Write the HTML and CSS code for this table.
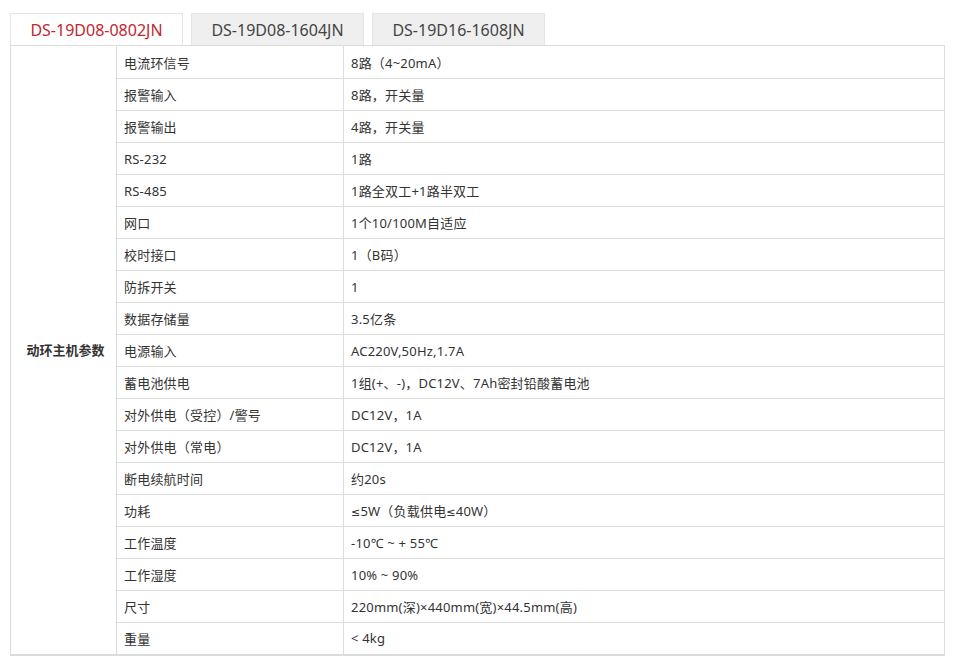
FILE: index.html
```html
<!DOCTYPE html>
<html lang="zh-CN">
<head>
<meta charset="utf-8">
<title>DS-19D08-0802JN 参数</title>
<link rel="stylesheet" href="styles.css">
</head>
<body>
<div class="wrap">
  <div class="tabs">
    <div class="tab active">DS-19D08-0802JN</div>
    <div class="tab">DS-19D08-1604JN</div>
    <div class="tab">DS-19D16-1608JN</div>
  </div>
  <table class="spec">
    <colgroup>
      <col class="c1"><col class="c2"><col class="c3">
    </colgroup>
    <tbody>
      <tr class="first"><td class="group" rowspan="19">动环主机参数</td><td>电流环信号</td><td>8路（4~20mA）</td></tr>
      <tr><td>报警输入</td><td>8路，开关量</td></tr>
      <tr><td>报警输出</td><td>4路，开关量</td></tr>
      <tr><td>RS-232</td><td>1路</td></tr>
      <tr><td>RS-485</td><td>1路全双工+1路半双工</td></tr>
      <tr><td>网口</td><td>1个10/100M自适应</td></tr>
      <tr><td>校时接口</td><td>1（B码）</td></tr>
      <tr><td>防拆开关</td><td>1</td></tr>
      <tr><td>数据存储量</td><td>3.5亿条</td></tr>
      <tr><td>电源输入</td><td>AC220V,50Hz,1.7A</td></tr>
      <tr><td>蓄电池供电</td><td>1组(+、-)，DC12V、7Ah密封铅酸蓄电池</td></tr>
      <tr><td>对外供电（受控）/警号</td><td>DC12V，1A</td></tr>
      <tr><td>对外供电（常电）</td><td>DC12V，1A</td></tr>
      <tr><td>断电续航时间</td><td>约20s</td></tr>
      <tr><td>功耗</td><td><span class="sym">≤</span>5W（负载供电<span class="sym">≤</span>40W）</td></tr>
      <tr><td>工作温度</td><td>-10℃ ~ + 55℃</td></tr>
      <tr><td>工作湿度</td><td>10% ~ 90%</td></tr>
      <tr><td>尺寸</td><td>220mm(深)×440mm(宽)×44.5mm(高)</td></tr>
      <tr><td>重量</td><td>&lt; 4kg</td></tr>
    </tbody>
  </table>
</div>
</body>
</html>
```

FILE: styles.css
```css
html, body {
  margin: 0;
  padding: 0;
  background: #fff;
}
body {
  font-family: "Noto Sans", "Noto Sans CJK SC", sans-serif;
  color: #333;
}
.wrap {
  padding: 13px 0 0 10px;
  width: 935px;
}
.tabs {
  display: flex;
  gap: 8px;
  height: 32px;
}
.tab {
  box-sizing: border-box;
  width: 173px;
  height: 32px;
  border: 1px solid #e4e4e4;
  border-bottom: none;
  background: #efefef;
  color: #444;
  font-size: 16px;
  display: flex;
  align-items: center;
  justify-content: center;
}
.tab.active {
  background: #fff;
  color: #c1272d;
}
.spec {
  width: 935px;
  border-collapse: collapse;
  border: 1px solid #dcdcdc;
  border-bottom-width: 2px;
  font-size: 13px;
  table-layout: fixed;
}
.c1 { width: 106px; }
.c2 { width: 227px; }
.spec td {
  border: 1px solid #dcdcdc;
  height: 32px;
  padding: 0 0 0 7px;
  box-sizing: border-box;
  vertical-align: middle;
  white-space: nowrap;
  letter-spacing: 0.2px;
}
.spec tr.first td {
  height: 33px;
}
.spec td.group {
  text-align: center;
  font-weight: bold;
  padding: 0 0 0 4px;
  letter-spacing: 0;
  color: #333;
}
.sym {
  font-family: "DejaVu Sans", sans-serif;
  font-size: 11px;
}
```
